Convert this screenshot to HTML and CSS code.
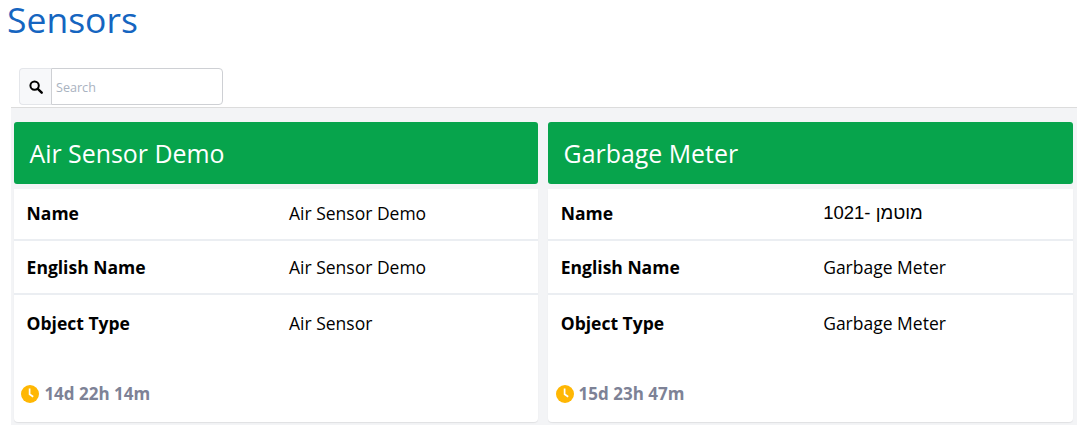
FILE: index.html
```html
<!DOCTYPE html>
<html lang="en">
<head>
<meta charset="utf-8">
<title>Sensors</title>
<link rel="stylesheet" href="styles.css">
</head>
<body>
<h1 class="title">Sensors</h1>
<div class="main">
  <div class="toolbar">
    <div class="search">
      <span class="search-icon">
        <svg width="14" height="14" viewBox="0 0 14 14"><circle cx="5.6" cy="5.6" r="4.2" fill="none" stroke="#000" stroke-width="2"/><path d="M8.8 8.8l3.9 3.9" stroke="#000" stroke-width="2.4" stroke-linecap="round"/></svg>
      </span>
      <input class="search-input" type="text" placeholder="Search">
    </div>
  </div>
  <div class="cards">
    <section class="card">
      <h2 class="card-head">Air Sensor Demo</h2>
      <div class="card-body">
        <div class="row"><span class="key">Name</span><span class="val">Air Sensor Demo</span></div>
        <div class="row"><span class="key">English Name</span><span class="val">Air Sensor Demo</span></div>
        <div class="row last"><span class="key">Object Type</span><span class="val">Air Sensor</span></div>
        <div class="age">
          <svg class="clock" width="18" height="18" viewBox="0 0 18 18"><circle cx="9" cy="9" r="9" fill="#ffb703"/><path d="M8.6 3.6v5.6l3.6 2.6" fill="none" stroke="#fff" stroke-width="1.7"/></svg>
          <span>14d 22h 14m</span>
        </div>
      </div>
    </section>
    <section class="card">
      <h2 class="card-head">Garbage Meter</h2>
      <div class="card-body">
        <div class="row"><span class="key">Name</span><span class="val he">1021- מוטמן</span></div>
        <div class="row"><span class="key">English Name</span><span class="val">Garbage Meter</span></div>
        <div class="row last"><span class="key">Object Type</span><span class="val">Garbage Meter</span></div>
        <div class="age">
          <svg class="clock" width="18" height="18" viewBox="0 0 18 18"><circle cx="9" cy="9" r="9" fill="#ffb703"/><path d="M8.6 3.6v5.6l3.6 2.6" fill="none" stroke="#fff" stroke-width="1.7"/></svg>
          <span>15d 23h 47m</span>
        </div>
      </div>
    </section>
  </div>
</div>
</body>
</html>
```
FILE: styles.css
```css
html, body {
  margin: 0;
  padding: 0;
  background: #fff;
}
body {
  height: 425px;
  overflow: hidden;
  font-family: "Open Sans", "Noto Sans", "Liberation Sans", sans-serif;
  color: #000;
}
.title {
  margin: 0;
  padding: 0 0 0 7px;
  height: 68px;
  font-size: 35.5px;
  font-weight: 400;
  line-height: 38px;
  color: #1565c0;
}
.main {
  margin-left: 11px;
}
.toolbar {
  height: 39px;
  padding-left: 8px;
  border-bottom: 1px solid #dcdcdc;
  box-sizing: content-box;
}
.search {
  display: flex;
  width: 204px;
  height: 37px;
}
.search-icon {
  display: flex;
  align-items: center;
  justify-content: center;
  width: 32px;
  box-sizing: border-box;
  background: #f7f8fa;
  border: 1px solid #e4e6ea;
  border-right: 0;
  border-radius: 4px 0 0 4px;
}
.search-input {
  flex: 1;
  min-width: 0;
  box-sizing: border-box;
  padding: 2px 4px 0;
  border: 1px solid #ced0d4;
  border-radius: 0 4px 4px 0;
  font-family: inherit;
  font-size: 12.6px;
  outline: 0;
}
.search-input::placeholder {
  color: #a9b2c0;
  opacity: 1;
}
.cards {
  display: grid;
  grid-template-columns: 524.2px 524.8px;
  gap: 10px;
  height: 317px;
  padding: 14px 4px 0 3px;
  background: #f3f4f6;
  box-sizing: border-box;
}
.card {
  display: flex;
  flex-direction: column;
  height: 300px;
}
.card-head {
  margin: 0;
  height: 62px;
  padding-left: 15.4px;
  background: #07a44c;
  border-radius: 3px;
  color: #fff;
  font-size: 24.9px;
  font-weight: 400;
  line-height: 62px;
}
.card-body {
  flex: 1;
  margin-top: 5px;
  display: flex;
  flex-direction: column;
  background: #fff;
  border-radius: 0 0 4px 4px;
  box-shadow: 0 1px 1px rgba(0, 0, 0, 0.08);
}
.row {
  display: grid;
  grid-template-columns: 262.4px 1fr;
  align-items: center;
  height: 50px;
  padding-left: 12.6px;
  border-bottom: 2px solid #ebeef2;
  font-size: 17.5px;
  box-sizing: content-box;
}
.row:first-child {
  padding-bottom: 2px;
  height: 48px;
}
.row + .row {
  height: 52px;
}
.row.last {
  border-bottom: 0;
  height: 56px;
}
.key {
  font-weight: 700;
}
.val {
  font-weight: 400;
}
.he {
  font-family: "Liberation Sans", "DejaVu Sans", sans-serif;
  font-size: 18.5px;
}
.age {
  margin-top: auto;
  display: flex;
  align-items: center;
  gap: 5px;
  height: 57px;
  padding-left: 7.4px;
  color: #7d8296;
  font-size: 17px;
  font-weight: 700;
}
```
